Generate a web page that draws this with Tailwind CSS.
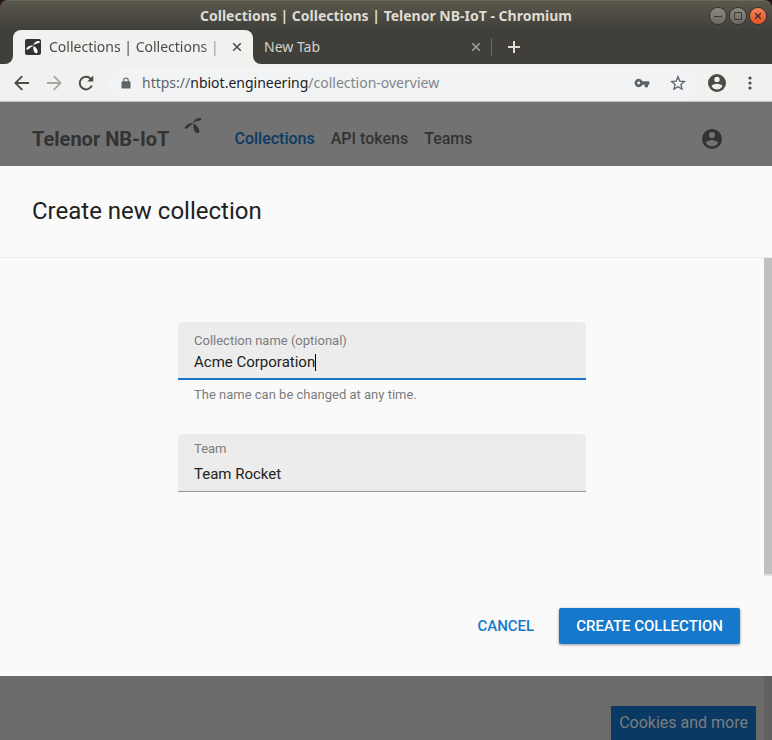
<!DOCTYPE html>
<html lang="en">
<head>
<meta charset="utf-8">
<meta name="viewport" content="width=device-width, initial-scale=1">
<title>Collections | Collections | Telenor NB-IoT</title>
<script src="https://cdn.jsdelivr.net/npm/@tailwindcss/browser@4"></script>
</head>
<body class="flex h-screen flex-col overflow-hidden bg-[#6b6b6b] font-[Roboto,sans-serif]">

<!-- Window frame -->
<div class="bg-[#2a1216] font-['Noto_Sans',sans-serif]">
  <div class="relative flex h-[30px] items-center justify-center rounded-t-lg border-t border-[#6b685c] bg-linear-to-b from-[#5a574c] to-[#403f3a]">
    <p class="text-sm font-bold text-[#dfdbd2]">Collections | Collections | Telenor NB-IoT - Chromium</p>
    <div class="absolute right-1.5 flex gap-1">
      <button aria-label="Minimize" class="size-4 rounded-full bg-linear-to-b from-[#8b8980] to-[#6b695f] ring-1 ring-[#35342f]">
        <svg viewBox="0 0 16 16" class="size-4" fill="none" stroke="#3a3935"><path d="M4 8.500h8"/></svg>
      </button>
      <button aria-label="Maximize" class="size-4 rounded-full bg-linear-to-b from-[#8b8980] to-[#6b695f] ring-1 ring-[#35342f]">
        <svg viewBox="0 0 16 16" class="size-4" fill="none" stroke="#3a3935"><path d="M4.500 4.500h7v7h-7z"/></svg>
      </button>
      <button aria-label="Close" class="size-4 rounded-full bg-linear-to-b from-[#f58058] to-[#e2531f] ring-1 ring-[#35342f]">
        <svg viewBox="0 0 16 16" class="size-4" fill="none" stroke="#3a2a24" stroke-width="1.300"><path d="M5.200 5.200l5.600 5.600M10.800 5.200l-5.600 5.600"/></svg>
      </button>
    </div>
  </div>
</div>

<!-- Tab strip -->
<div class="flex h-[34px] items-stretch bg-[#403f3a] pl-[5px] font-['Noto_Sans',sans-serif] text-sm">
  <svg viewBox="0 0 8 8" class="size-2 self-end" fill="#f2f1f0" aria-hidden="true"><path d="M8 0v8H0a8 8 0 0 0 8-8z"/></svg>
  <div class="flex w-60 items-center rounded-t-lg bg-[#f2f1f0] pl-3 pr-2 text-[#4c4b48]">
    <svg viewBox="0 0 16 16" class="size-4 shrink-0" aria-hidden="true">
      <rect width="16" height="16" rx="2" fill="#333"/>
      <g fill="#fff"><path d="M8.300 6.900C6.300 5.900 3.200 7 1.500 9.300c-.6 1 .4 1.800 1.400 1.200C4.600 9.500 5.700 7.500 8.300 6.900z"/><path d="M8.300 6.600C8.600 3.900 10.800 2 14 2c1.200.2 1 1.600-.1 1.900-2.200.5-4 .9-5.600 2.700z"/><path d="M8.600 6.900c2.700 1.300 4.400 4 4 6.300-.4 1.500-2.200 1.500-3.100.1C8.300 11.500 8 9 8.600 6.900z"/></g>
    </svg>
    <span class="ml-2 flex-1 whitespace-nowrap mask-r-from-85% mask-r-to-100%">Collections | Collections |</span>
    <button aria-label="Close tab" class="shrink-0">
      <svg viewBox="0 0 16 16" class="size-4" fill="none" stroke="#4c4b48" stroke-width="1.600"><path d="M4.200 4.200l7.600 7.600M11.800 4.200l-7.600 7.600"/></svg>
    </button>
  </div>
  <svg viewBox="0 0 8 8" class="size-2 self-end" fill="#f2f1f0" aria-hidden="true"><path d="M0 0v8h8a8 8 0 0 1-8-8z"/></svg>
  <div class="my-2 flex w-[231px] items-center border-r border-[#6b6a66] pl-[3px] pr-[7px] text-[#d5d2ca]">
    <span class="flex-1">New Tab</span>
    <button aria-label="Close tab">
      <svg viewBox="0 0 16 16" class="size-4" fill="none" stroke="#a5a39d" stroke-width="1.500"><path d="M4.200 4.200l7.600 7.600M11.800 4.200l-7.600 7.600"/></svg>
    </button>
  </div>
  <button aria-label="New tab" class="ml-3.5">
    <svg viewBox="0 0 16 16" class="size-4" fill="none" stroke="#dfdbd2" stroke-width="2"><path d="M8 2v12M2 8h12"/></svg>
  </button>
</div>

<!-- Toolbar -->
<div class="flex h-[38px] items-center border-b border-[#c4c2bf] bg-[#f2f1f0] px-3 font-['Noto_Sans',sans-serif]">
  <button aria-label="Back"><svg viewBox="0 0 24 24" class="size-5" fill="#4c4b48"><path d="M20.500 10.800H6.800l6.300-6.300L11.500 3 2.500 12l9 9 1.600-1.500-6.300-6.300h13.700z"/></svg></button>
  <button aria-label="Forward" class="ml-3"><svg viewBox="0 0 24 24" class="size-5" fill="#a8a6a3"><path d="M3.500 10.800h13.700l-6.300-6.300L12.500 3l9 9-9 9-1.600-1.500 6.300-6.300H3.500z"/></svg></button>
  <button aria-label="Reload" class="ml-3"><svg viewBox="0 0 24 24" class="size-5" fill="none" stroke="#4c4b48" stroke-width="2.400"><path d="M19 15.200A7.600 7.600 0 1 1 17.600 6.800L20 9.200"/><path d="M20.700 3v7.200h-7.200z" fill="#4c4b48" stroke="none"/></svg></button>
  <div class="ml-3 flex h-7 flex-1 items-center rounded-full bg-[#f1f3f4] pl-3 pr-2.5">
    <svg viewBox="0 0 24 24" class="size-3 shrink-0" fill="#5f6368" aria-hidden="true"><path d="M19 8.500h-1.500V6.500A5.500 5.500 0 0 0 6.500 6.500v2H5a2 2 0 0 0-2 2V21a2 2 0 0 0 2 2h14a2 2 0 0 0 2-2V10.500a2 2 0 0 0-2-2zM8.700 6.500a3.300 3.300 0 0 1 6.600 0v2H8.700z"/></svg>
    <p class="ml-2.5 flex-1 whitespace-nowrap text-sm text-[#80868b]"><span class="text-[#5f6368]">https://</span><span class="text-[#202124]">nbiot.engineering</span>/collection-overview</p>
    <button aria-label="Passwords"><svg viewBox="0 0 24 24" class="size-4" fill="#5f6368"><path d="M12.700 9.500A6.200 6.200 0 1 0 12.700 14.500H16v4h5v-4h2v-5zM7 14.200A2.200 2.200 0 1 1 7 9.800a2.200 2.200 0 0 1 0 4.400z"/></svg></button>
    <button aria-label="Bookmark" class="ml-5"><svg viewBox="0 0 24 24" class="size-4" fill="none" stroke="#5f6368" stroke-width="2"><path d="M12 2.600l2.700 6.500 7 .6-5.300 4.600 1.600 6.900-6-3.700-6 3.700 1.600-6.900-5.300-4.600 7-.6z"/></svg></button>
  </div>
  <button aria-label="Profile" class="ml-3"><svg viewBox="2 2 20 20" class="size-[18px]" fill="#4c4b48"><path d="M12 2a10 10 0 1 0 0 20 10 10 0 0 0 0-20zm0 3a3 3 0 1 1 0 6 3 3 0 0 1 0-6zm0 14.200a7.200 7.200 0 0 1-6-3.220c.03-1.990 4-3.080 6-3.080 1.990 0 5.970 1.090 6 3.080a7.200 7.200 0 0 1-6 3.220z"/></svg></button>
  <button aria-label="Menu" class="ml-3.5"><svg viewBox="0 0 20 20" class="size-5" fill="#4c4b48"><circle cx="10" cy="5" r="1.600"/><circle cx="10" cy="10" r="1.600"/><circle cx="10" cy="15" r="1.600"/></svg></button>
</div>

<!-- Dimmed page header -->
<header class="flex h-16 shrink-0 items-center bg-[#727272] pl-8 pr-[50px] pt-2.5 text-[#333]">
  <a href="#" class="flex items-center text-xl font-bold">Telenor NB-IoT
    <svg viewBox="0 0 18 17" class="mb-7 ml-[15px] h-[17px] w-[18px]" fill="#333" aria-hidden="true"><path d="M9.300 6.700C6.500 5.600 3 7 1 10c-.7 1.200.2 2.300 1.500 1.700C5 10.500 6 7.800 9.300 6.700z"/><path d="M9.200 6.300C9.500 3.300 12.500 1 16 1c1.700.2 1.700 2 .1 2.400-2.800.4-5 .8-6.900 2.900z"/><path d="M9.600 6.700c3.500 1.300 6 5.300 5.800 8-.4 1.800-2.900 1.800-4.200 0C9.500 12.500 9 9.300 9.600 6.700z"/></svg>
  </a>
  <nav class="ml-8 flex flex-1 gap-4 text-base font-medium">
    <a href="#" class="text-[#0a3a63]">Collections</a>
    <a href="#">API tokens</a>
    <a href="#">Teams</a>
  </nav>
  <button aria-label="Account"><svg viewBox="2 2 20 20" class="size-5" fill="#333"><path d="M12 2a10 10 0 1 0 0 20 10 10 0 0 0 0-20zm0 3a3 3 0 1 1 0 6 3 3 0 0 1 0-6zm0 14.200a7.200 7.200 0 0 1-6-3.220c.03-1.990 4-3.080 6-3.080 1.990 0 5.970 1.090 6 3.080a7.200 7.200 0 0 1-6 3.220z"/></svg></button>
</header>

<!-- Dialog -->
<section role="dialog" aria-labelledby="dialog-title" class="flex min-h-0 flex-1 flex-col bg-[#fafafa] text-[#212121]">
  <h1 id="dialog-title" class="border-b border-[#ebebeb] px-8 pb-7 pt-[27px] text-2xl leading-9">Create new collection</h1>
  <div class="flex min-h-0 flex-1">
    <form id="create-form" class="flex-1 px-8 pt-16">
      <div class="mx-auto max-w-[408px]">
        <div class="relative flex h-[58px] flex-col rounded-t border-b-2 border-[#1578cb] bg-[#ececec] px-4 pt-[11px]">
          <label for="name" class="text-[13px] leading-4 text-[#7c7c7c]">Collection name (optional)</label>
          <input id="name" type="text" value="Acme Corporation" aria-describedby="name-help" class="mt-[3px] w-full bg-transparent text-[15px] leading-5 caret-transparent outline-none">
          <span class="absolute left-[137px] top-8 h-[17px] w-px bg-black" aria-hidden="true"></span>
        </div>
        <p id="name-help" class="px-4 pt-[7px] text-[13px] leading-4 text-[#7c7c7c]">The name can be changed at any time.</p>
        <div class="mt-[31px] flex h-[58px] flex-col rounded-t border-b border-[#979797] bg-[#ececec] px-4 pt-[7px]">
          <label for="team" class="text-[13px] leading-4 text-[#7c7c7c]">Team</label>
          <select id="team" class="mt-[7px] w-full appearance-none bg-transparent text-[15px] leading-5 outline-none"><option>Team Rocket</option></select>
        </div>
      </div>
    </form>
    <div class="flex w-2 flex-col bg-[#dedede]" aria-hidden="true"><div class="mb-0.5 flex-1 bg-[#c0c0c0]"></div></div>
  </div>
  <div class="flex justify-end gap-2 px-8 py-8 text-[15px] font-medium">
    <button type="button" class="h-9 px-[17px] text-[#1578cb]">CANCEL</button>
    <button type="submit" form="create-form" class="h-9 rounded-xs bg-[#1578cb] px-[17px] text-white shadow-[0_1px_3px_rgba(0,0,0,0.4)]">CREATE COLLECTION</button>
  </div>
</section>

<!-- Dimmed page bottom -->
<footer class="flex h-16 shrink-0 items-end justify-end">
  <button class="mr-2 h-[34px] bg-[#0a3a63] px-2 text-base text-[#7d7d7d]">Cookies and more</button>
  <div class="h-full w-2 bg-[#606060]" aria-hidden="true"></div>
</footer>
</body>
</html>
